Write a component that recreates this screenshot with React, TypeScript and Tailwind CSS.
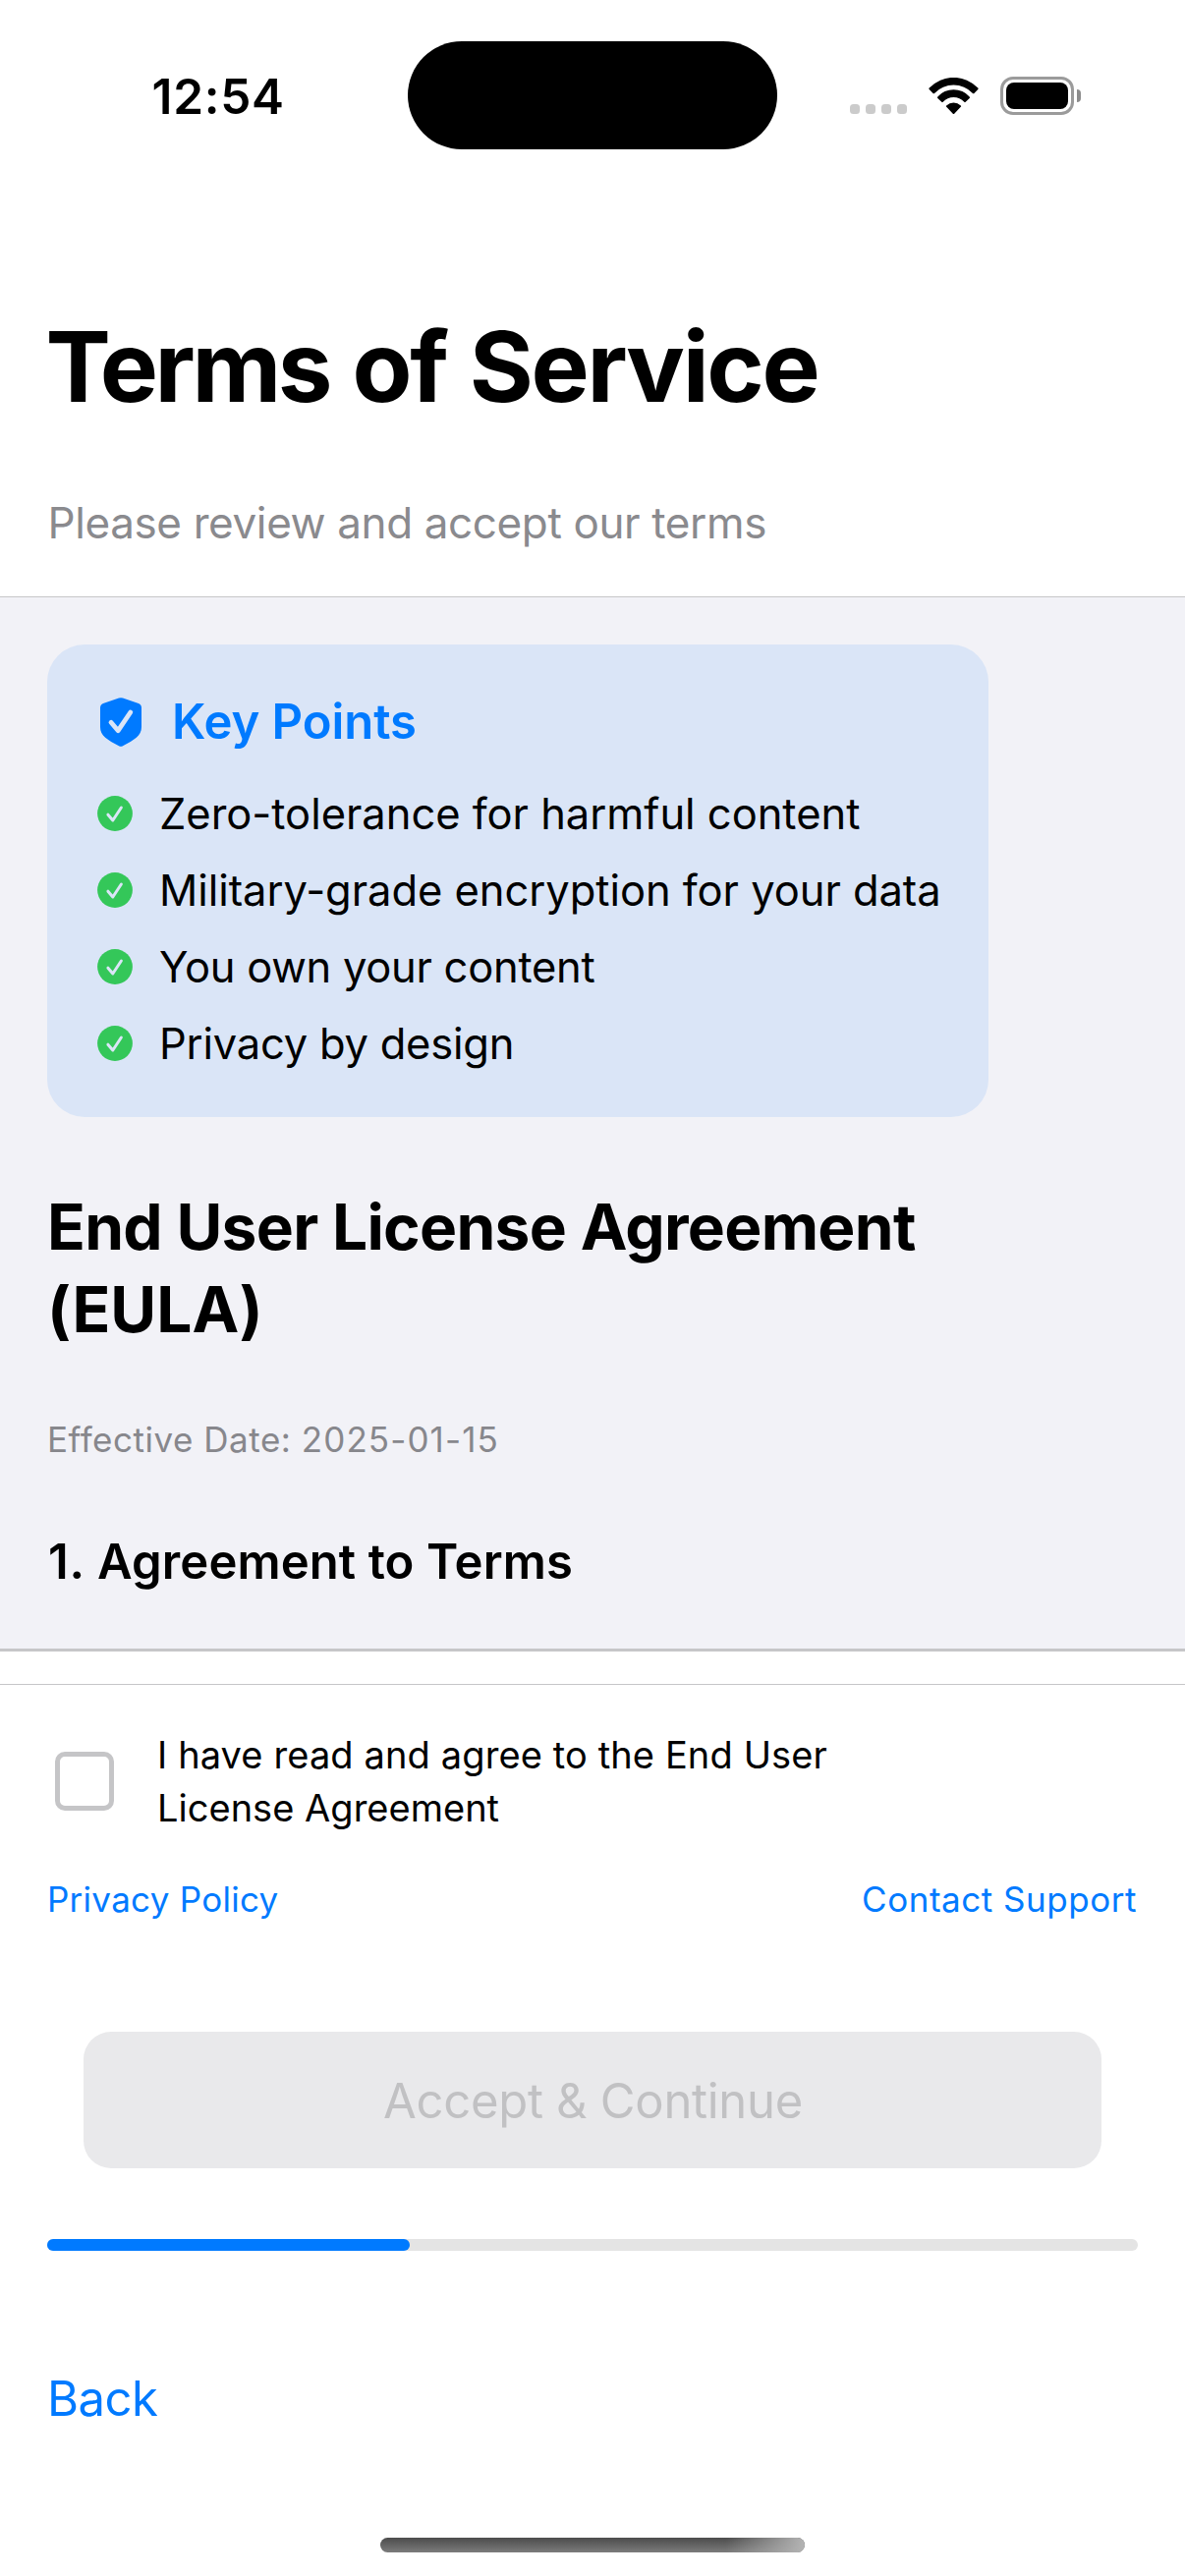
const keyPoints = [
  { text: "Zero-tolerance for harmful content", tracking: "tracking-[-0.03px]" },
  { text: "Military-grade encryption for your data", tracking: "tracking-[-0.05px]" },
  { text: "You own your content", tracking: "tracking-[-0.27px]" },
  { text: "Privacy by design", tracking: "tracking-[-0.23px]" },
];

function SignalDots() {
  return (
    <div className="mt-[106px] flex gap-[6px]">
      {[0, 1, 2, 3].map((i) => (
        <span key={i} className="size-[10px] rounded-[3.5px] bg-[#cbcbcb]" />
      ))}
    </div>
  );
}

function WifiIcon() {
  return (
    <svg className="mt-[78.6px] ml-[22px] h-[37.5px] w-[51px]" viewBox="0 0 51 37.5" fill="#000">
      <path d="M0.7 12 Q0 11.3 0.7 10.6 A34 34 0 0 1 50.3 10.6 Q51 11.3 50.3 12 L46.4 15.9 Q45.7 16.6 45 15.9 A27 27 0 0 0 6 15.9 Q5.3 16.6 4.6 15.9 Z" />
      <path d="M9.3 20.9 Q8.6 20.2 9.3 19.5 A21.5 21.5 0 0 1 41.7 19.5 Q42.4 20.2 41.7 20.9 L37.7 24.8 Q37 25.5 36.3 24.8 A14.6 14.6 0 0 0 14.7 24.8 Q14 25.5 13.3 24.8 Z" />
      <path d="M18.2 29.8 Q17.5 29.1 18.2 28.5 A10.6 10.6 0 0 1 32.8 28.5 Q33.5 29.1 32.8 29.8 L26.2 36.7 Q25.5 37.4 24.8 36.7 Z" />
    </svg>
  );
}

function BatteryIcon() {
  return (
    <div className="mt-[78px] ml-[22px] flex items-center gap-[3px] self-start">
      <div className="h-[39px] w-[75px] rounded-[13px] border-[3px] border-[#9b9b9b] p-[3px]">
        <div className="h-[27px] w-[63px] rounded-[8px] bg-black" />
      </div>
      <div className="h-[13px] w-[4px] rounded-r-full bg-[#8c8c8c]" />
    </div>
  );
}

function ShieldIcon() {
  return (
    <svg className="h-[50px] w-[42px]" viewBox="0 0 42 50">
      <path
        d="M19 0.6 Q21 -0.2 23 0.6 L39 6 Q42 7.2 42 10.5 V30 C42 39 34.5 43 23 49.3 Q21 50.4 19 49.3 C7.5 43 0 39 0 30 V10.5 Q0 7.2 3 6 Z"
        fill="#007aff"
      />
      <path
        d="M11 25.3 L18.2 33.7 L30.8 15"
        fill="none"
        stroke="#dae5f7"
        strokeWidth="4.8"
        strokeLinecap="round"
        strokeLinejoin="round"
      />
    </svg>
  );
}

function CheckCircle() {
  return (
    <svg className="size-[36px]" viewBox="0 0 36 36">
      <circle cx="18" cy="18" r="17.9" fill="#34c759" />
      <path
        d="M10.9 19.2 L15.8 25 L24.4 12"
        fill="none"
        stroke="#dae5f7"
        strokeWidth="3"
        strokeLinecap="round"
        strokeLinejoin="round"
      />
    </svg>
  );
}

export default function App() {
  return (
    <main className="flex h-[2622px] w-[1206px] flex-col overflow-hidden bg-white font-['Inter',sans-serif] text-black">
      <header className="border-b border-[#c6c6c8]">
        <div className="flex h-[180px]">
          <div className="mt-[68px] w-[261px] pl-[154.5px] text-[49.5px] leading-[60px] font-semibold tracking-[0.7px]">
            12:54
          </div>
          <div className="mt-[42px] ml-[154px] h-[110px] w-[376px] rounded-full bg-black" />
          <div className="ml-[74px] flex">
            <SignalDots />
            <WifiIcon />
            <BatteryIcon />
          </div>
        </div>
        <h1 className="mt-[133px] px-[46.5px] text-[99.5px] leading-[120px] font-bold tracking-[-2.3px] [word-spacing:2px]">
          <span className="tracking-[-3.4px]">Terms</span> of Service
        </h1>
        <p className="mt-[69px] px-[48.5px] pb-[45px] text-[44px] leading-[60px] tracking-[-0.38px] text-[#8a8a8e]">
          Please review and accept our terms
        </p>
      </header>

      <section className="h-[1070px] bg-[#f2f2f7] px-[48px] pt-[48px]">
        <div className="h-[481px] w-[958px] rounded-[38px] bg-[#dae5f7] pt-[49px]">
          <div className="flex items-center gap-[31px] pl-[54px]">
            <ShieldIcon />
            <h2 className="text-[49px] leading-[60px] font-semibold tracking-[-0.06px] text-[#007aff]">
              Key Points
            </h2>
          </div>
          <ul className="mt-[24px] pl-[51px]">
            {keyPoints.map(({ text, tracking }) => (
              <li key={text} className="flex items-center gap-[27px]">
                <CheckCircle />
                <span className={`text-[43.5px] leading-[78px] whitespace-nowrap ${tracking}`}>{text}</span>
              </li>
            ))}
          </ul>
        </div>
        <h2 className="mt-[70px] text-[64px] leading-[84px] font-bold tracking-[-0.7px]">
          End User License Agreement
          <br />
          <span className="tracking-[0.1px]">(EULA)</span>
        </h2>
        <p className="mt-[66px] text-[35px] leading-[48px] tracking-[0.52px] text-[#87878c]">
          Effective Date: <span className="tracking-[1.1px]">2025-01-15</span>
        </p>
        <h3 className="mt-[71px] pl-px text-[49px] leading-[60px] font-semibold tracking-[0.1px]">
          <span className="tracking-[0.8px]">1. </span>Agreement to Terms
        </h3>
      </section>

      <div className="h-[36px] border-t-[3px] border-[#c6c6c8]" />

      <footer className="border-t border-[#c6c6c8] px-[48px] pt-[44px]">
        <label className="flex items-center pl-[8px]">
          <span className="size-[60px] rounded-[10px] border-[5px] border-[#c5c5c7]" />
          <span className="ml-[44px] text-[38px] leading-[54px] tracking-[0.12px]">
            I have read and agree to the End User
            <br />
            <span className="tracking-[0.02px]">License Agreement</span>
          </span>
        </label>
        <div className="mt-[42px] flex justify-between pr-px text-[35px] leading-[48px] text-[#007aff]">
          <a className="tracking-[0.27px]">Privacy Policy</a>
          <a className="tracking-[0.53px]">Contact Support</a>
        </div>
        <button
          disabled
          className="mx-[37px] mt-[111px] flex h-[139px] w-[1036px] items-center justify-center rounded-[28px] bg-[#e9e9eb] pt-[2px] pl-px text-[49px] tracking-[-0.3px] text-[#c1c1c3]"
        >
          Accept &amp; Continue
        </button>
        <div className="mt-[72px] h-[12px] rounded-full bg-[#e4e4e4]">
          <div className="h-full w-[369px] rounded-full bg-[#007aff]" />
        </div>
        <a className="mt-[121px] block text-[49px] leading-[60px] tracking-[-0.52px] text-[#007aff]">Back</a>
        <div className="mx-auto mt-[111px] flex h-[15px] w-[432px] overflow-hidden rounded-full bg-linear-to-b from-[#4c4c4c] to-[#7c7c7c]">
          <div className="ml-auto h-full w-[80px] bg-linear-to-r from-transparent to-[#b4b4b4]" />
        </div>
      </footer>
    </main>
  );
}
